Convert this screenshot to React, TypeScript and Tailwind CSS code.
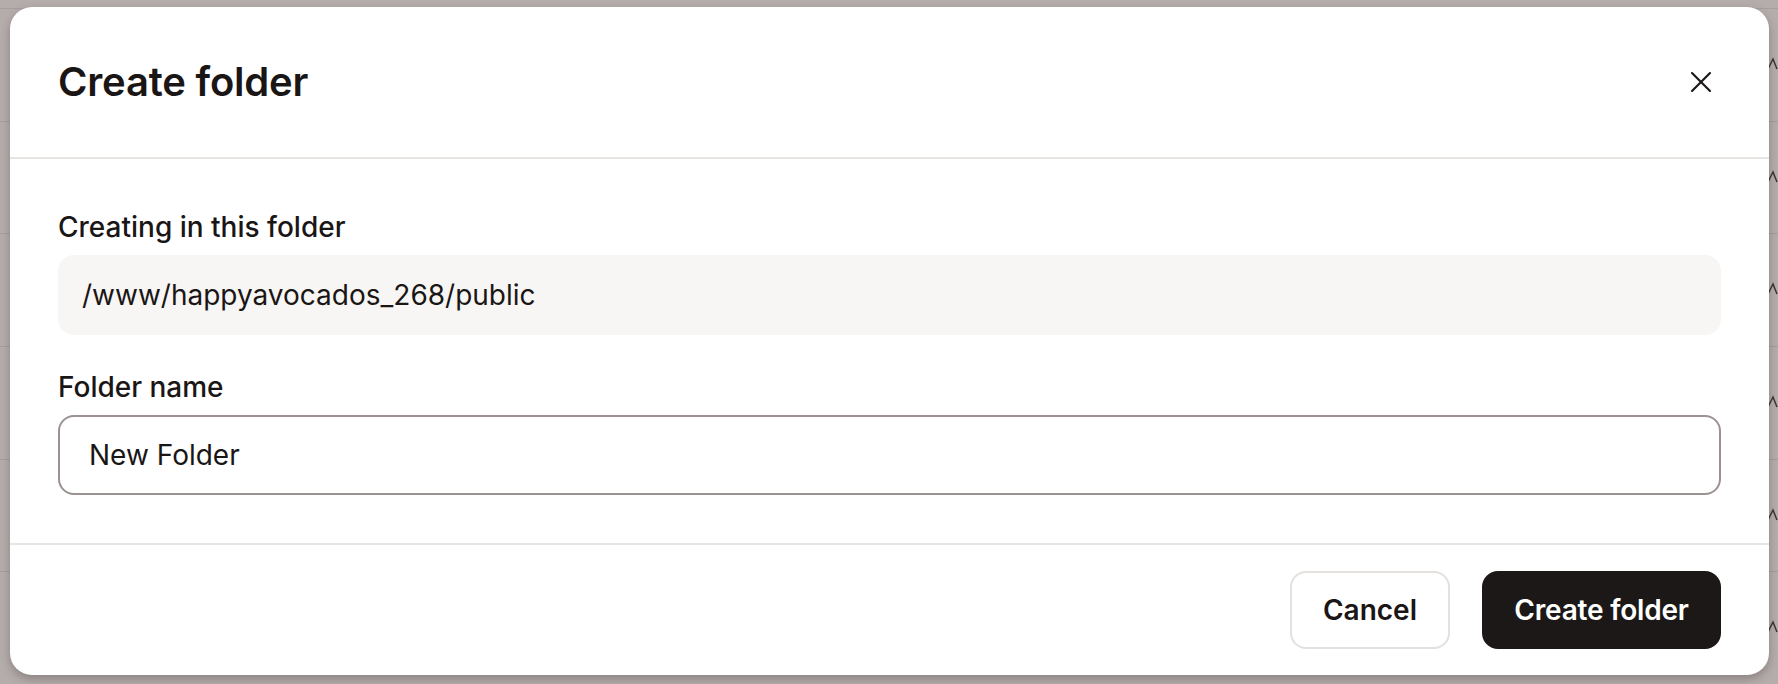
import React from "react";

function CloseIcon() {
  return (
    <svg width="36" height="36" viewBox="0 0 24 24" fill="none" stroke="currentColor" strokeWidth="1.4" strokeLinecap="round" strokeLinejoin="round">
      <path d="M18 6 6 18" />
      <path d="m6 6 12 12" />
    </svg>
  );
}

export default function App() {
  const rows = [0, 1, 2, 3, 4, 5];
  return (
    <div
      className="relative w-[1778px] h-[684px] overflow-hidden bg-[#b5adac]"
      style={{ fontFamily: "Inter, 'Noto Sans', sans-serif" }}
    >
      {/* background content beneath the overlay */}
      <div className="absolute inset-0 flex flex-col pt-[8px]">
        {rows.map((r) => (
          <div key={r} className="h-[118px] border-t border-[#a69e9d] flex justify-end items-center">
            <svg width="14" height="18" viewBox="0 0 14 18" className="text-[#3a3433] mb-[6px]">
              <path d="M1 4 L5 14 L9 6 L13 16" fill="none" stroke="currentColor" strokeWidth="1.5" />
            </svg>
          </div>
        ))}
      </div>

      {/* dialog */}
      <div className="absolute left-[10px] top-[7px] w-[1759px] h-[668px] bg-white rounded-[22px] shadow-[0_4px_10px_rgba(60,50,50,0.35)] flex flex-col text-[#1a1616]">
        <div className="h-[152px] px-[48px] flex items-center justify-between border-b-2 border-[#e7e4e2]">
          <h1 className="text-[40px] leading-[56px] font-semibold tracking-[-0.2px]">Create folder</h1>
          <button className="w-[40px] h-[40px] flex items-center justify-center text-[#1a1616]">
            <CloseIcon />
          </button>
        </div>

        <div className="px-[48px] pt-[48px] pb-[48px] flex flex-col gap-[32px] border-b-2 border-[#e7e4e2]">
          <div className="flex flex-col gap-[8px]">
            <label className="text-[28px] leading-[40px] font-medium">Creating in this folder</label>
            <div className="h-[80px] rounded-[16px] bg-[#f8f6f4] pl-[24px] flex items-center text-[28px]">
              /www/happyavocados_268/public
            </div>
          </div>
          <div className="flex flex-col gap-[8px]">
            <label className="text-[28px] leading-[40px] font-medium">Folder name</label>
            <div className="h-[80px] rounded-[16px] border-2 border-[#9c9292] pl-[29px] flex items-center text-[28px]">
              New Folder
            </div>
          </div>
        </div>

        <div className="flex-1 px-[48px] flex items-center justify-end gap-[32px]">
          <button className="h-[78px] w-[160px] rounded-[16px] border-2 border-[#e4e0de] bg-white text-[28px] font-semibold text-[#1a1616]">
            Cancel
          </button>
          <button className="h-[78px] w-[239px] rounded-[16px] border-2 border-[#1c1818] bg-[#1c1818] text-[28px] font-semibold text-white tracking-[-0.2px]">
            Create folder
          </button>
        </div>
      </div>
    </div>
  );
}
